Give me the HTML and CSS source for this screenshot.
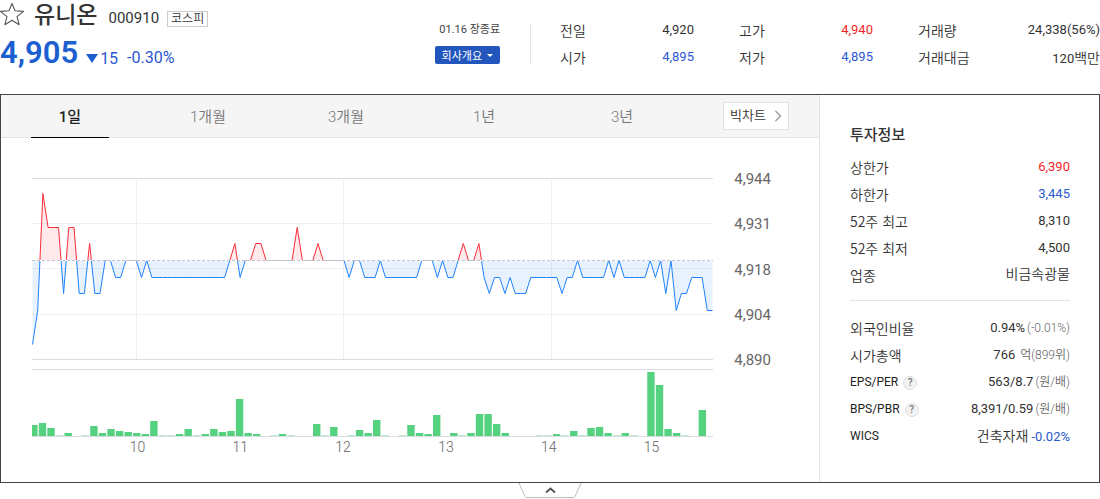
FILE: index.html
```html
<!DOCTYPE html>
<html lang="ko">
<head>
  <meta charset="UTF-8" />
  <meta name="viewport" content="width=device-width, initial-scale=1.0" />
  <title>유니온 000910</title>
  <link rel="stylesheet" href="styles.css">
</head>
<body>
  <header class="header">
    <div class="stock">
      <div class="stock-title">
        <button type="button" class="star" aria-label="관심종목">
          <svg width="24" height="24" viewBox="0 0 24 24"><path d="M12 1.500l3 7.300 8.500.6-6.500 5.200 2.100 8.100-7.100-4.400-7.100 4.400L7 14.600.5 9.400l8.500-.6z" fill="none" stroke="#555" stroke-width="1.100" stroke-linejoin="round"/></svg>
        </button>
        <h1>유니온</h1>
        <span class="code">000910</span>
        <span class="market">코스피</span>
      </div>
      <div class="stock-price">
        <strong>4,905</strong>
        <span class="change"><svg width="12" height="9" viewBox="0 0 12 9"><path d="M0 0h12L6 9z" fill="#1c5fd0"/></svg>15</span>
        <span class="rate">-0.30%</span>
      </div>
    </div>
    <div class="meta">
      <span>01.16 장종료</span>
      <button type="button" class="overview">회사개요
        <svg width="6" height="3" viewBox="0 0 6 3"><path d="M0 0h6L3 3z" fill="#fff"/></svg>
      </button>
    </div>
    <div class="stats">
      <dl>
        <dt>전일</dt><dd>4,920</dd>
        <dt>시가</dt><dd class="down">4,895</dd>
      </dl>
      <dl>
        <dt>고가</dt><dd class="up">4,940</dd>
        <dt>저가</dt><dd class="down">4,895</dd>
      </dl>
      <dl class="wide">
        <dt>거래량</dt><dd>24,338(56%)</dd>
        <dt>거래대금</dt><dd>120<span class="word">백만</span></dd>
      </dl>
    </div>
  </header>

  <main class="panel">
    <section class="chart">
      <nav class="tabs">
        <button type="button" class="tab active">1일</button>
        <button type="button" class="tab">1개월</button>
        <button type="button" class="tab">3개월</button>
        <button type="button" class="tab">1년</button>
        <button type="button" class="tab">3년</button>
        <a href="#" class="big-chart">빅차트
          <svg width="8" height="12" viewBox="0 0 8 12"><path d="M1.500 1l5 5-5 5" fill="none" stroke="#999" stroke-width="1.300"/></svg>
        </a>
      </nav>
      <div class="plot">
        <div class="plot-main">
          <svg class="graph" viewBox="0 0 681 260" preserveAspectRatio="none">
            <defs>
              <clipPath id="above"><rect x="0" y="0" width="681" height="82"/></clipPath>
              <clipPath id="below"><rect x="0" y="83" width="681" height="120"/></clipPath>
            </defs>
            <path class="grid" d="M0 45.500H681M0 90.500H681M0 136.500H681M104.500 0V181M311.500 0V181M519.500 0V181"/>
            <path class="frame" d="M0 .5H681M0 181.500H681M0 191.500H681"/>
            <polygon id="areaUp" class="area-up" clip-path="url(#above)"/>
            <polygon id="areaDown" class="area-down" clip-path="url(#below)"/>
            <path class="base" d="M0 82.500H681"/>
            <g id="flat" class="flat"></g>
            <polyline id="lineUp" class="line-up" clip-path="url(#above)"/>
            <polyline id="lineDown" class="line-down" clip-path="url(#below)"/>
            <g id="bars" class="bars"></g>
            <path class="frame" d="M0 258.500H681"/>
          </svg>
          <div class="hours">
            <span>10</span><span>11</span><span>12</span><span>13</span><span>14</span><span>15</span>
          </div>
        </div>
        <div class="prices">
          <span>4,944</span><span>4,931</span><span>4,918</span><span>4,904</span><span>4,890</span>
        </div>
      </div>
    </section>

    <aside class="info">
      <h2>투자정보</h2>
      <table>
        <tr><th scope="row">상한가</th><td class="up">6,390</td></tr>
        <tr><th scope="row">하한가</th><td class="down">3,445</td></tr>
        <tr><th scope="row">52주 최고</th><td>8,310</td></tr>
        <tr><th scope="row">52주 최저</th><td>4,500</td></tr>
        <tr><th scope="row">업종</th><td><span class="word">비금속광물</span></td></tr>
      </table>
      <table class="second">
        <tr><th scope="row">외국인비율</th><td>0.94%<small>(-0.01%)</small></td></tr>
        <tr><th scope="row">시가총액</th><td>766<small> 억(899위)</small></td></tr>
        <tr><th scope="row" class="latin">EPS/PER<button type="button" class="help">?</button></th><td>563/8.7<small>(원/배)</small></td></tr>
        <tr><th scope="row" class="latin">BPS/PBR<button type="button" class="help">?</button></th><td>8,391/0.59<small>(원/배)</small></td></tr>
        <tr><th scope="row" class="latin">WICS</th><td><span class="word">건축자재</span> <span class="down">-0.02%</span></td></tr>
      </table>
    </aside>
  </main>

  <button type="button" class="fold" aria-label="접기">
    <svg width="64" height="16" viewBox="0 0 64 16">
      <path d="M1 0l6 13.500q.5 1 2 1h46q1.500 0 2-1L63 0" fill="#fff" stroke="#bbb"/>
      <path d="M28 9.500l4.500-4 4.500 4" fill="none" stroke="#555" stroke-width="2"/>
    </svg>
  </button>

  <script src="chart.js"></script>
</body>
</html>
```

FILE: styles.css
```css
* {
  box-sizing: border-box;
}
body {
  margin: 0;
  font-family: Roboto, "Noto Sans CJK KR", sans-serif;
  font-size: 13px;
  color: #333;
  background: #fff;
}
button {
  font-family: inherit;
  border: none;
  background: none;
  padding: 0;
  cursor: pointer;
}
a {
  color: inherit;
  text-decoration: none;
}
svg {
  display: block;
}
h1, h2, dl, dd {
  margin: 0;
}
.up {
  color: #f41f28;
}
.down {
  color: #2a58cf;
}
.word {
  font-size: 14px;
  font-weight: 350;
}

/* header */
.header {
  display: flex;
  height: 94px;
}
.stock {
  flex: 1;
}
.stock-title {
  display: flex;
  align-items: center;
  height: 32px;
}
.star {
  margin-bottom: 4px;
}
h1 {
  margin-left: 10px;
  font-size: 23px;
  font-weight: 500;
  line-height: 32px;
}
.code {
  margin: 3px 0 0 11px;
  font-size: 15px;
}
.market {
  margin: 6px 0 0 8px;
  padding: 0 3px;
  border: 1px solid #ccc;
  font-size: 12px;
  font-weight: 350;
  line-height: 14px;
}
.stock-price {
  display: flex;
  align-items: baseline;
  color: #2a58cf;
  font-size: 16px;
  line-height: 42px;
}
.stock-price strong {
  color: #1c5fd0;
  font-size: 31px;
  font-weight: 600;
}
.change {
  display: flex;
  align-items: center;
  gap: 2px;
  margin: 0 9px 0 8px;
}
.meta {
  display: flex;
  flex-direction: column;
  align-items: flex-end;
  gap: 7px;
  padding-top: 21px;
  margin-right: 30px;
  color: #444;
  font-size: 11px;
  line-height: 18px;
}
.overview {
  display: flex;
  align-items: center;
  gap: 5px;
  height: 18px;
  padding: 0 7px;
  border-radius: 2px;
  background: #2256bd;
  color: #fff;
  font-size: 11px;
}
.stats {
  display: flex;
  gap: 45px;
  height: 41px;
  margin-top: 23px;
  padding-left: 29px;
  border-left: 1px solid #e5e5e5;
}
.stats dl {
  display: grid;
  grid-template-columns: auto auto;
  grid-auto-rows: 27px;
  align-items: center;
  width: 134px;
  margin-top: -7px;
}
.stats .wide {
  width: 182px;
}
dt {
  font-family: "Noto Sans CJK KR", sans-serif;
  font-size: 14px;
  font-weight: 350;
  line-height: 20px;
}
dd {
  text-align: right;
}

/* panel */
.panel {
  display: flex;
  border: 1px solid #444;
}
.chart {
  flex: 1;
  border-right: 1px solid #e5e5e5;
}
.tabs {
  display: flex;
  height: 43px;
  background: #f5f5f5;
  border-bottom: 1px solid #e5e5e5;
}
.tab {
  width: 78px;
  height: 43px;
  margin: 0 30px;
  padding-bottom: 2px;
  color: #777;
  font-size: 15px;
  font-weight: 350;
}
.tab.active {
  border-bottom: 1px solid #000;
  color: #222;
  font-weight: 500;
}
.big-chart {
  display: flex;
  align-items: center;
  gap: 8px;
  height: 28px;
  margin: 7px 30px 0 auto;
  padding: 0 6px;
  border: 1px solid #e2e2e6;
  background: #fff;
  font-weight: 350;
  line-height: 24px;
}
.plot {
  display: flex;
  padding: 30px 48px 26px 31px;
}
.plot-main {
  flex: 1;
  padding-top: 10px;
}
.graph {
  width: 100%;
  height: 260px;
}
.hours {
  display: flex;
  padding: 0 10px 0 54px;
  color: #666;
  font-size: 14px;
  font-weight: 300;
  line-height: 18px;
}
.hours span {
  flex: 1;
  text-align: center;
}
.prices {
  display: flex;
  flex-direction: column;
  justify-content: space-between;
  width: 58px;
  height: 202px;
  padding-top: 1px;
  color: #666;
  font-size: 15px;
  line-height: 20px;
  text-align: right;
}

/* graph */
.graph path,
.graph polyline,
.graph line {
  fill: none;
  vector-effect: non-scaling-stroke;
}
.graph .grid {
  stroke: #efeff3;
}
.graph .frame {
  stroke: #d9dce4;
}
.graph .base {
  stroke: #bfc3d0;
  stroke-dasharray: 3 2;
}
.flat {
  stroke: #bfc0cc;
}
.area-up {
  fill: #fb2c3a;
  fill-opacity: 0.1;
}
.area-down {
  fill: #1e82ff;
  fill-opacity: 0.1;
}
.line-up {
  stroke: #fb2c3a;
}
.line-down {
  stroke: #1e82ff;
}
.bars {
  fill: #55d280;
}

/* info */
.info {
  width: 279px;
  padding: 26px 29px 31px 30px;
}
h2 {
  font-size: 15px;
  font-weight: 500;
  line-height: 28px;
}
table {
  width: 100%;
  margin-top: 4px;
  border-collapse: collapse;
}
.second {
  margin-top: 12px;
  border-top: 1px solid #e2e2e8;
}
.second tr:first-child > * {
  height: 41px;
  padding-top: 13px;
}
th, td {
  height: 27px;
  padding: 0;
  line-height: 20px;
}
th {
  font-family: "Noto Sans CJK KR", sans-serif;
  font-size: 14px;
  font-weight: 350;
  text-align: left;
}
.latin {
  color: #222;
  font-family: Roboto, sans-serif;
  font-size: 12px;
  font-weight: 400;
}
td {
  text-align: right;
}
small {
  margin-left: 2px;
  color: #666;
  font-size: 12px;
  font-weight: 350;
}
.help {
  width: 14px;
  height: 14px;
  margin-left: 5px;
  border: 1px solid #ddd;
  border-radius: 50%;
  background: #f3f3f3;
  color: #777;
  font-size: 10px;
  font-weight: 500;
  line-height: 12px;
}

.fold {
  display: block;
  margin: 0 auto;
}
```

FILE: chart.js
```javascript
const SVG = 'http://www.w3.org/2000/svg';
const BASE = 4920;
const BASE_Y = 82.5;

// [price, number of 3-minute ticks]
const runs = [
  [4895, 1], [4905, 1], [4940, 1], [4930, 3], [4910, 1], [4930, 2], [4910, 2], [4925, 1],
  [4910, 2], [4920, 2], [4915, 2], [4920, 3], [4915, 1], [4920, 1], [4915, 15], [4920, 1],
  [4925, 1], [4915, 1], [4920, 2], [4925, 2], [4920, 6], [4930, 1], [4920, 3], [4925, 1],
  [4920, 5], [4915, 1], [4920, 2], [4915, 3], [4920, 1], [4915, 7], [4920, 3], [4915, 1],
  [4920, 1], [4915, 2], [4920, 1], [4925, 1], [4920, 2], [4925, 1], [4915, 1], [4910, 1],
  [4915, 2], [4910, 1], [4915, 1], [4910, 3], [4915, 6], [4910, 1], [4915, 2], [4920, 1],
  [4915, 5], [4920, 1], [4915, 1], [4920, 1], [4915, 5], [4920, 1], [4915, 1], [4920, 1],
  [4910, 1], [4920, 1], [4905, 1], [4910, 2], [4915, 3], [4905, 2]
];

const volumes = [
  11, 13, 8, 1, 3, 0, 1, 10, 3, 7, 5, 4, 3, 2, 15, 1, 1, 2, 7, 1,
  2, 7, 4, 5, 37, 3, 2, 0, 1, 2, 1, 0, 0, 12, 1, 9, 0, 1, 6, 3,
  16, 1, 0, 1, 11, 3, 2, 21, 0, 3, 1, 3, 22, 22, 12, 3, 0, 0, 0, 1,
  1, 2, 1, 5, 1, 8, 9, 3, 1, 3, 1, 0, 64, 51, 7, 3, 1, 0, 26
];

const prices = runs.flatMap(([price, count]) => Array(count).fill(price));
const step = 680 / (prices.length - 1);
const x = i => 0.5 + i * step;
const y = price => Math.floor(BASE_Y + (BASE - price) * 3.34) + 0.5;

const points = prices.map((p, i) => `${x(i).toFixed(1)},${y(p)}`).join(' ');
const area = `0.5,${BASE_Y} ${points} 680.5,${BASE_Y}`;

document.getElementById('lineUp').setAttribute('points', points);
document.getElementById('lineDown').setAttribute('points', points);
document.getElementById('areaUp').setAttribute('points', area);
document.getElementById('areaDown').setAttribute('points', area);

function add(parent, tag, attrs) {
  const el = document.createElementNS(SVG, tag);
  for (const key in attrs) {
    el.setAttribute(key, attrs[key]);
  }
  document.getElementById(parent).appendChild(el);
}

// solid line where the price stays at the previous close
prices.forEach((p, i) => {
  if (p === BASE && prices[i + 1] === BASE) {
    add('flat', 'line', { x1: x(i), x2: x(i + 1), y1: BASE_Y, y2: BASE_Y });
  }
});

volumes.forEach((v, i) => {
  if (v > 0) {
    add('bars', 'rect', {
      x: 1.9 + i * 8.57 - 3.7,
      y: 258 - v,
      width: 7.4,
      height: v,
      opacity: v < 2 ? 0.4 : 1
    });
  }
});
```
